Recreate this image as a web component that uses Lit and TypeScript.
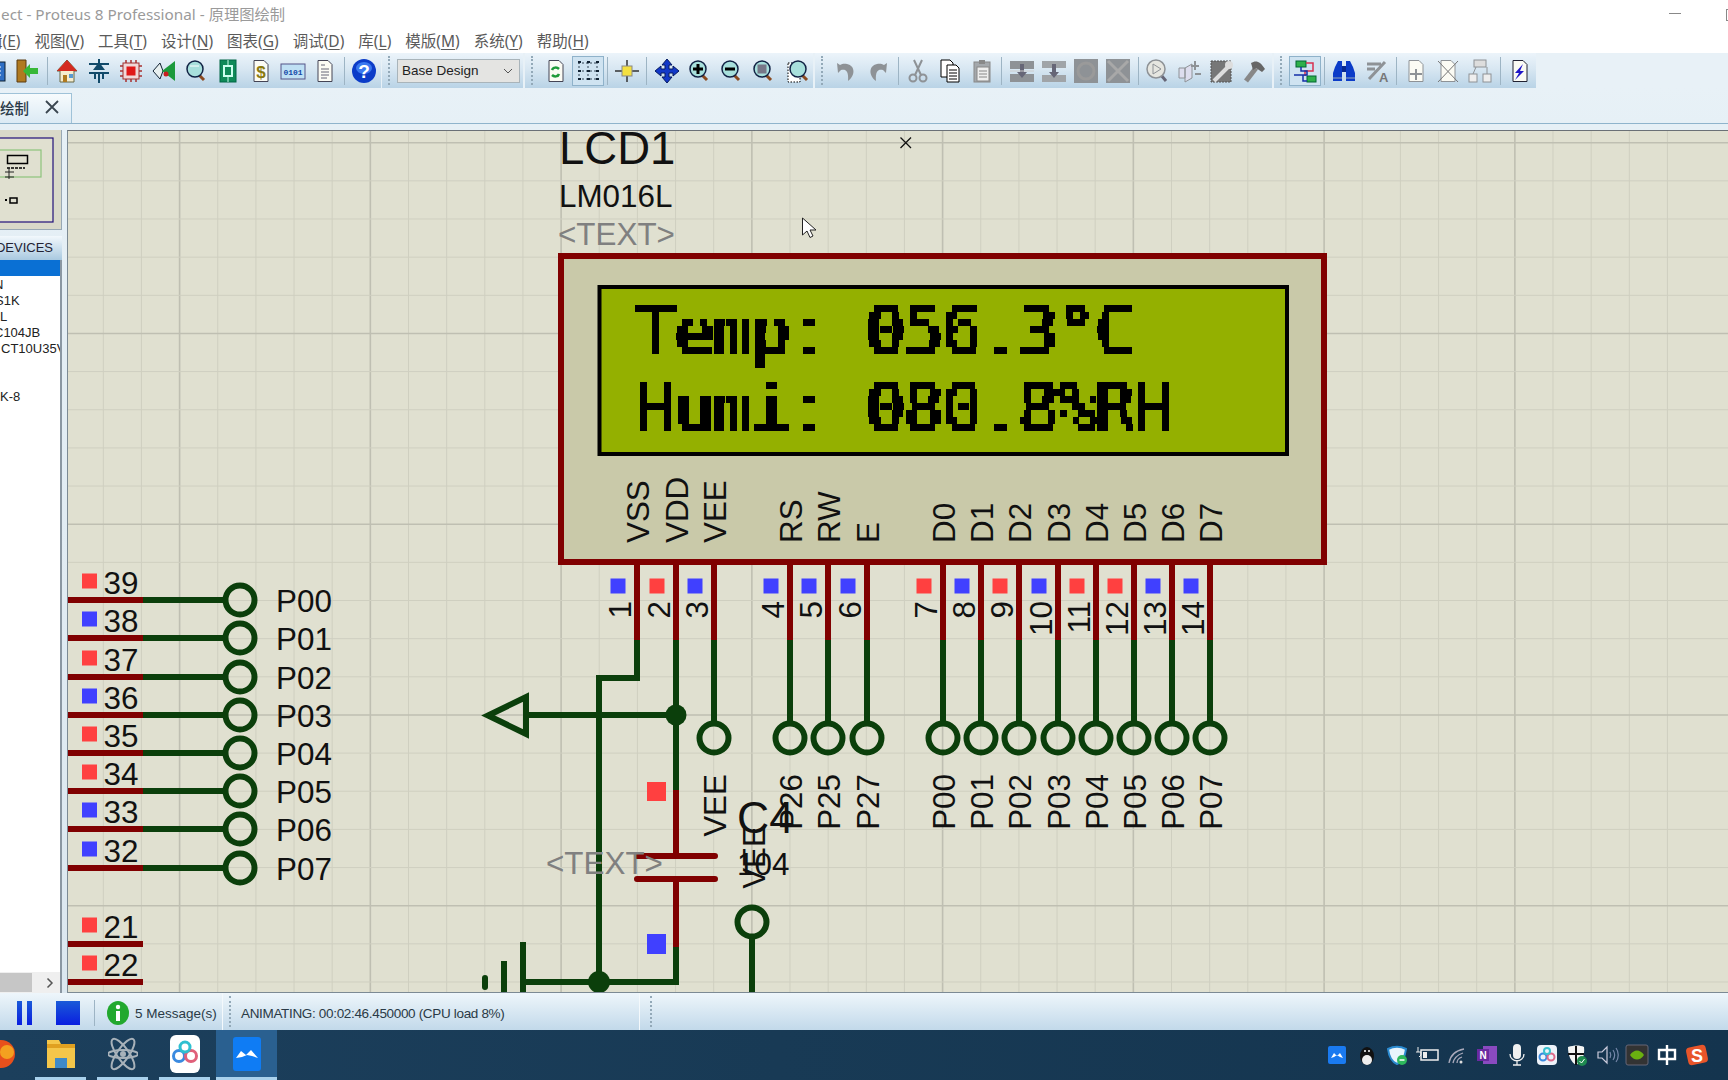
import { LitElement, html, css, svg } from "lit";
import { customElement } from "lit/decorators.js";

const RED = "#800000";
const GREEN = "#0b3f0b";
const BOX_RED = "#ff4040";
const BOX_BLUE = "#4040ff";

// --- toolbar icons, all on a 24x24 box ---
const mag = (inner: unknown, fill = "#a8e0dc") => svg`
  <path d="M15 16l5 5" stroke="#8a4a20" stroke-width="3" />
  <circle cx="11" cy="10" r="8" fill=${fill} stroke="#124" stroke-width="1.5" />${inner}`;
const page = (inner: unknown, stroke = "#445") => svg`
  <path d="M5 1.5h10l4 4v17H5z" fill="#fbfbf4" stroke=${stroke} />${inner}`;
const grey = "#8e9296";

const ICONS: Record<string, unknown> = {
  book: svg`<rect x="2" y="3" width="20" height="19" fill="#2f6fc4" stroke="#123" /><path d="M6 8h12M6 12h12M6 16h12" stroke="#fff" />`,
  door: svg`<path d="M2 1h9v22H2z" fill="#b07a20" stroke="#5a3a10" /><path d="M8 12l7-7v4h8v6h-8v4z" fill="#38b838" />`,
  house: svg`<path d="M12 1L2 12h3v11h14V12h3z" fill="#f6edd0" stroke="#664" /><path d="M12 1L2 12h20z" fill="#d42a20" /><rect x="8" y="16" width="4" height="7" fill="#b07a20" /><rect x="14" y="15" width="4" height="4" fill="#5a9ad0" />`,
  diode: svg`<path d="M12 0v9M2 5h20M2 14h20M12 14v10M8 14v6M16 14v6" stroke="#124a6a" stroke-width="2" fill="none" /><path d="M6 11L12 3l6 8z" fill="#124a6a" />`,
  chip: svg`<path d="M1 7h22M1 12h22M1 17h22M7 1v22M12 1v22M17 1v22" stroke="#a83030" stroke-width="1.5" /><rect x="4" y="4" width="16" height="16" fill="#f0d8d8" stroke="#a03030" /><rect x="7.5" y="7.5" width="9" height="9" fill="#e01818" />`,
  led: svg`<path d="M1 12L8 4l3 8-3 8z" fill="#e8f0f0" stroke="#123" /><path d="M23 2v20L10 12z" fill="#1c9a3c" /><circle cx="14" cy="15" r="2.5" fill="#c82020" />`,
  glass: mag(svg`<path d="M6 7h9" stroke="#fff" />`),
  pcb: svg`<rect x="4" y="1" width="16" height="22" fill="#0f8a58" stroke="#064" /><rect x="8" y="7" width="8" height="10" fill="none" stroke="#cfe" stroke-width="2" /><path d="M12 1v6M12 17v6" stroke="#cfe" />`,
  dollar: page(svg`<text x="12" y="19" font-size="17" font-weight="700" text-anchor="middle" fill="#8a7a10" font-family="Liberation Sans">$</text>`),
  binary: svg`<rect x="0" y="5" width="24" height="15" fill="#bfe0f4" stroke="#558" /><text x="12" y="15.5" font-size="8" font-weight="700" text-anchor="middle" fill="#1448a8" font-family="Liberation Mono">0101</text>`,
  report: page(svg`<path d="M8 6h4M8 10h8M8 13h8M8 16h8M8 19h6" stroke="#667" />`),
  help: svg`<circle cx="12" cy="12" r="12" fill="#0c3cc8" /><ellipse cx="12" cy="9" rx="8" ry="6" fill="#3a78f0" /><text x="12" y="19" font-size="19" font-weight="700" text-anchor="middle" fill="#fff" font-family="Liberation Sans">?</text>`,
  refresh: page(svg`<path d="M8 11c1-3 5-3 7-1M15 15c-1 3-5 3-7 1" stroke="#1f9a3a" stroke-width="2.5" fill="none" />`),
  grid: svg`<path d="M3 3v18M12 3v18M21 3v18M2 4h20M2 12h20M2 20h20" stroke="#345" stroke-dasharray="2 2" /><path d="M2 3h3M11 3h3M20 3h3M2 12h3M11 12h3M20 12h3M2 20h3M11 20h3M20 20h3" stroke="#123" stroke-width="2" />`,
  origin: svg`<path d="M12 1v22M0 12h24" stroke="#333" stroke-width="1.5" /><rect x="7" y="7" width="10" height="10" fill="#f4e040" stroke="#888" />`,
  move: svg`<path d="M12 0l5 6h-3v4h4V7l6 5-6 5v-3h-4v4h3l-5 6-5-6h3v-4H6v3l-6-5 6-5v3h4V6H7z" fill="#1238c8" stroke="#061a60" />`,
  zoomIn: mag(svg`<path d="M6 10h10M11 5v10" stroke="#000" stroke-width="3" />`),
  zoomOut: mag(svg`<path d="M6 10h10" stroke="#000" stroke-width="3" />`),
  zoomAll: mag(svg`<rect x="6.5" y="5.5" width="9" height="9" fill="#778" />`),
  zoomArea: svg`<g transform="translate(3 0)"><rect x="1" y="4" width="12" height="19" fill="#fff" stroke="#000" stroke-dasharray="1.5 1.5" />${mag(svg``)}</g>`,
  undo: svg`<path d="M3 4l1 10 3-3c4-1 8 0 7 11 7-5 8-15-1-17-3-.5-5 0-7 1z" fill=${grey} />`,
  redo: svg`<path d="M21 4l-1 10-3-3c-4-1-8 0-7 11-7-5-8-15 1-17 3-.5 5 0 7 1z" fill=${grey} />`,
  cut: svg`<path d="M8 1l7 15M16 1L9 16" stroke=${grey} stroke-width="2" /><circle cx="7" cy="19" r="3.5" fill="none" stroke=${grey} stroke-width="2" /><circle cx="17" cy="19" r="3.5" fill="none" stroke=${grey} stroke-width="2" />`,
  copy: svg`<path d="M3 1h9l3 3v14H3z" fill="#fff" stroke="#000" /><path d="M9 6h9l3 3v14H9z" fill="#fff" stroke="#000" /><path d="M11 11h8M11 14h8M11 17h8M11 20h8" stroke="#000" />`,
  paste: svg`<rect x="4" y="3" width="16" height="20" fill="#a4a8ac" stroke="#888" /><rect x="9" y="1" width="6" height="4" fill="#888" /><rect x="7" y="8" width="12" height="14" fill="#eee" stroke="#888" /><path d="M9 12h8M9 15h8M9 18h8" stroke="#888" />`,
  blockCopy: svg`<rect x="0" y="2" width="24" height="8" fill=${grey} /><rect x="0" y="15" width="24" height="8" fill=${grey} /><path d="M10 5h4v8h3l-5 6-5-6h3z" fill="#667" /><path d="M0 12h24" stroke="#ccc" />`,
  blockMove: svg`<rect x="0" y="2" width="24" height="7" fill="#a0a4a8" /><rect x="0" y="16" width="24" height="7" fill="#a0a4a8" /><path d="M10 5h4v8h3l-5 6-5-6h3z" fill="#667" />`,
  blockRot: svg`<rect x="0" y="0" width="24" height="24" fill=${grey} /><circle cx="12" cy="12" r="8" fill="none" stroke="#9a9a9a" stroke-width="3" />`,
  blockDel: svg`<rect x="0" y="0" width="24" height="24" fill=${grey} /><path d="M2 2l20 20M22 2L2 22" stroke="#a8a8a8" stroke-width="3" />`,
  pick: svg`<path d="M15 16l5 6" stroke="#667" stroke-width="3" /><circle cx="10" cy="10" r="9" fill="#e6e6e0" stroke=${grey} stroke-width="1.5" /><path d="M7 5v10l8-5z" fill="none" stroke=${grey} />`,
  plug: svg`<path d="M1 9h6v10H1zM7 9l7-4v14l-7 4z" fill="#dde" stroke=${grey} /><path d="M17 2v9M13 7h8M17 15h6" stroke=${grey} stroke-width="2" />`,
  tools: svg`<rect x="1" y="2" width="20" height="21" fill="#777" stroke-dasharray="2 1" stroke="#555" /><path d="M4 22L18 8" stroke="#ddd" stroke-width="4" /><circle cx="19" cy="6" r="4" fill="#ddd" />`,
  hammer: svg`<path d="M3 22L13 9" stroke="#888" stroke-width="5" /><path d="M8 4c5-3 9-2 14 6l-3 3-6-4-3 2z" fill="#666" />`,
  nets: svg`<rect x="3" y="2" width="10" height="6" fill="#2eb04a" stroke="#063" /><rect x="14" y="17" width="9" height="6" fill="#2eb04a" stroke="#063" /><path d="M13 4h7v8h-8v5" fill="none" stroke="#d83050" stroke-width="1.5" /><path d="M8 8v4h6v4h-4v6h4M1 16h9" fill="none" stroke="#1430a8" stroke-width="1.5" />`,
  binoc: svg`<path d="M3 8l3-6h4v20H1V14zM21 8l-3-6h-4v20h9V14z" fill="#0c3cc8" /><path d="M1 19h9M14 19h9" stroke="#9ab" /><rect x="10" y="7" width="4" height="6" fill="#0a2a90" />`,
  textA: svg`<path d="M2 5h14M2 10h8M4 20L20 3" stroke=${grey} stroke-width="3" /><text x="14" y="23" font-size="13" font-weight="700" fill="#777" font-family="Liberation Sans">A</text>`,
  docAdd: page(svg`<path d="M12 10v11M6 15h12" stroke=${grey} stroke-width="2" />`, grey),
  docDel: page(svg`<path d="M2 2l20 21M22 2L2 23" stroke="#777" />`, grey),
  tree: svg`<rect x="6" y="1" width="12" height="7" fill="#ddd" stroke=${grey} /><rect x="1" y="15" width="8" height="8" fill="#eee" stroke=${grey} /><rect x="15" y="15" width="8" height="8" fill="#eee" stroke=${grey} /><path d="M5 15l3-7M19 15V8" stroke=${grey} />`,
  bolt: page(svg`<path d="M15 5l-8 9h4l-4 7 9-9h-4z" fill="#2016c8" />`, "#223"),
};

type Tool = { icon?: string; sep?: boolean; on?: boolean };
const t = (icon: string, on = false): Tool => ({ icon, on });
const SEP: Tool = { sep: true };

// --- schematic data ---
const LCD_PINS = [
  { n: 1, x: 637, name: "VSS", box: BOX_BLUE },
  { n: 2, x: 676, name: "VDD", box: BOX_RED },
  { n: 3, x: 714, name: "VEE", box: BOX_BLUE, net: "VEE" },
  { n: 4, x: 790, name: "RS", box: BOX_BLUE, net: "P26" },
  { n: 5, x: 828, name: "RW", box: BOX_BLUE, net: "P25" },
  { n: 6, x: 867, name: "E", box: BOX_BLUE, net: "P27" },
  { n: 7, x: 943, name: "D0", box: BOX_RED, net: "P00" },
  { n: 8, x: 981, name: "D1", box: BOX_BLUE, net: "P01" },
  { n: 9, x: 1019, name: "D2", box: BOX_RED, net: "P02" },
  { n: 10, x: 1058, name: "D3", box: BOX_BLUE, net: "P03" },
  { n: 11, x: 1096, name: "D4", box: BOX_RED, net: "P04" },
  { n: 12, x: 1134, name: "D5", box: BOX_RED, net: "P05" },
  { n: 13, x: 1172, name: "D6", box: BOX_BLUE, net: "P06" },
  { n: 14, x: 1210, name: "D7", box: BOX_BLUE, net: "P07" },
];

const MCU_PINS = [
  { n: 39, y: 600, box: BOX_RED, net: "P00" },
  { n: 38, y: 638, box: BOX_BLUE, net: "P01" },
  { n: 37, y: 677, box: BOX_RED, net: "P02" },
  { n: 36, y: 715, box: BOX_BLUE, net: "P03" },
  { n: 35, y: 753, box: BOX_RED, net: "P04" },
  { n: 34, y: 791, box: BOX_RED, net: "P05" },
  { n: 33, y: 829, box: BOX_BLUE, net: "P06" },
  { n: 32, y: 868, box: BOX_BLUE, net: "P07" },
  { n: 21, y: 944, box: BOX_RED },
  { n: 22, y: 982, box: BOX_RED },
  { n: 23, y: 1020, box: BOX_RED },
];

const range = (n: number) => Array.from({ length: n }, (_, i) => i);

@customElement("schem-canvas")
class SchemCanvas extends LitElement {
  static styles = css`
    :host {
      display: block;
      width: 1661px;
      height: 863px;
      background: #e0e0d0;
      overflow: hidden;
    }
    svg {
      display: block;
      width: 1661px;
      height: 863px;
      font-family: "Liberation Sans", Arial, sans-serif;
    }
    .lcd-text {
      font-family: "DejaVu Sans Mono", monospace;
      font-size: 67px;
      letter-spacing: -2.1px;
      fill: #000;
      stroke: #000;
      stroke-width: 0.4px;
    }
    .label {
      font-size: 31.4px;
      fill: #111;
    }
    .ghost {
      font-size: 31.4px;
      fill: #808080;
    }
    .wire {
      fill: none;
      stroke: #0b3f0b;
      stroke-width: 6;
    }
    .pin {
      fill: none;
      stroke: #800000;
      stroke-width: 6;
    }
  `;

  grid() {
    return svg`
      ${range(43).map((k) => {
        const x = 65.15 + 38.15 * k;
        const major = (k + 4) % 5 === 2;
        return svg`<line x1=${x} x2=${x} y1="130" y2="993" stroke=${major ? "#bfbfb2" : "#cfcfc0"} stroke-width=${major ? 1.6 : 1} />`;
      })}
      ${range(23).map((k) => {
        const y = 142.7 + 38.15 * k;
        return svg`<line x1="67" x2="1728" y1=${y} y2=${y} stroke=${k % 5 === 0 ? "#bfbfb2" : "#cfcfc0"} stroke-width=${k % 5 === 0 ? 1.6 : 1} />`;
      })}
    `;
  }

  lcd() {
    return svg`
      <text x="559" y="164" font-size="45.5" fill="#111">LCD1</text>
      <text x="559" y="207" class="label">LM016L</text>
      <text x="558" y="245" class="ghost">&lt;TEXT&gt;</text>
      <rect x="561" y="256" width="763" height="306" fill="#c9c9a9" stroke=${RED} stroke-width="6" />
      <rect x="599.5" y="287" width="687.5" height="167" fill="#94b000" stroke="#000" stroke-width="4" />
      <defs>
        <filter id="dots" filterUnits="userSpaceOnUse" x="600" y="290" width="686" height="162" color-interpolation-filters="sRGB">
          <feFlood x="600.8" y="294" width="2" height="1" flood-color="#000" />
          <feComposite x="600" y="294" width="6.37" height="7" />
          <feTile result="grid" />
          <feComposite in="SourceGraphic" in2="grid" operator="in" />
          <feComponentTransfer><feFuncA type="discrete" tableValues="0 0 1 1" /></feComponentTransfer>
          <feMorphology operator="dilate" radius="2 3" />
        </filter>
      </defs>
      <g filter="url(#dots)">
        <text x="636" y="354" class="lcd-text">Temp: 056.3°C</text>
        <text x="636" y="431" class="lcd-text">Humi: 080.8%RH</text>
      </g>
      ${LCD_PINS.map(
        (p) => svg`
          <text class="label" transform="translate(${p.x + 12} 543) rotate(-90)">${p.name}</text>
          <path class="pin" d="M${p.x} 562V640" />
          <rect x=${p.x - 26.5} y="578.5" width="15" height="15" fill=${p.box} />
          <text class="label" text-anchor="end" transform="translate(${p.x - 6} 601) rotate(-90)">${p.n}</text>
        `,
      )}
      ${LCD_PINS.filter((p) => p.net).map(
        (p) => svg`
          <path class="wire" d="M${p.x} 640V724" />
          <circle class="wire" cx=${p.x} cy="738" r="14.5" />
          <text class="label" text-anchor="end" transform="translate(${p.x + 11.5} 774) rotate(-90)">${p.net}</text>
        `,
      )}
    `;
  }

  power() {
    return svg`
      <path class="wire" d="M637 640V678H599V982" />
      <path class="wire" d="M676 640V790" />
      <path class="wire" d="M676 947V982H523" />
      <path class="wire" d="M676 715H525" />
      <path class="wire" d="M526 697V734L488 715.5Z" />
      <circle cx="676" cy="715" r="10.5" fill=${GREEN} />
      <circle cx="599" cy="982" r="11" fill=${GREEN} />
      <path class="wire" d="M523 942V993M504 961V993" />
      <path d="M485 978V987" stroke=${GREEN} stroke-width="6" stroke-linecap="round" />

      <path class="pin" d="M676 790V855M676 879V947" />
      <path class="pin" stroke-linecap="round" d="M637 856H715M637 879H715" />
      <rect x="647" y="782" width="19" height="19" fill=${BOX_RED} />
      <rect x="647" y="934" width="19" height="20" fill=${BOX_BLUE} />

      <text x="546" y="874" class="ghost">&lt;TEXT&gt;</text>
      <text x="737" y="833" font-size="44.5" fill="#111">C4</text>
      <text x="737" y="875" class="label">104</text>
      <text class="label" text-anchor="end" transform="translate(765 826) rotate(-90)">VEE</text>
      <circle class="wire" cx="752" cy="922" r="14.5" />
      <path class="wire" d="M752 936V993" />
    `;
  }

  mcu() {
    return MCU_PINS.map(
      (p) => svg`
        <path class="pin" d="M67 ${p.y}H143" />
        <rect x="82" y=${p.y - 26.5} width="15" height="15" fill=${p.box} />
        <text x="103.5" y=${p.y - 6.5} class="label">${p.n}</text>
        ${p.net
          ? svg`
            <path class="wire" d="M143 ${p.y}H226" />
            <circle class="wire" cx="240" cy=${p.y} r="14.5" />
            <text x="276" y=${p.y + 12} class="label">${p.net}</text>`
          : null}
      `,
    );
  }

  render() {
    return html`<svg viewBox="67 130 1661 863">
      ${this.grid()} ${this.mcu()} ${this.lcd()} ${this.power()}
      <path d="M900.5 137.5l10.5 10.5M911 137.5l-10.5 10.5" stroke="#111" stroke-width="1.3" />
      <path d="M802.5 218v17l4.5-4 3 6.5 3-1.5-3-6h6z" fill="#fff" stroke="#222" stroke-width="1" />
    </svg>`;
  }
}

const DEVICES = [
  { name: "", on: true, x: 0 },
  { name: "N", x: -6 },
  { name: "S1K", x: -5 },
  { name: "L", x: 0 },
  { name: "C104JB", x: -6 },
  { name: "CT10U35V", x: 1 },
  { name: "", x: 0 },
  { name: "", x: 0 },
  { name: "K-8", x: 0 },
];

@customElement("side-panel")
class SidePanel extends LitElement {
  static styles = css`
    :host {
      display: flex;
      flex-direction: column;
      width: 62px;
      height: 863px;
      font-family: "Liberation Sans", Arial, sans-serif;
      overflow: hidden;
    }
    .overview {
      height: 100px;
      flex: none;
      background: #d9d9c9;
      border-right: 1px solid #98a8b4;
      border-bottom: 1px solid #98a8b4;
      box-sizing: border-box;
    }
    .overview svg {
      display: block;
    }
    .gap {
      height: 6px;
      flex: none;
    }
    .head {
      height: 24px;
      flex: none;
      box-sizing: border-box;
      padding: 0 9px 2px 0;
      display: flex;
      align-items: center;
      justify-content: flex-end;
      font-size: 13px;
      color: #223;
      white-space: nowrap;
      background: linear-gradient(#f2f8fc, #a9c9e0);
    }
    .list {
      flex: 1;
      background: #fff;
      border-right: 2px solid #8a97a2;
      overflow: hidden;
    }
    .row {
      height: 16px;
      line-height: 18px;
      font-size: 13px;
      color: #222;
      white-space: nowrap;
    }
    .row.on {
      background: #0a70d4;
    }
    .row span {
      display: inline-block;
    }
    .scroll {
      height: 21px;
      flex: none;
      display: flex;
      align-items: center;
      justify-content: space-between;
      background: #efefef;
      border-right: 2px solid #8a97a2;
    }
    .thumb {
      width: 32px;
      height: 19px;
      background: #c6c6c6;
    }
    .scroll svg {
      margin-right: 6px;
    }
  `;

  render() {
    return html`
      <div class="overview">
        <svg width="62" height="100" viewBox="0 130 62 100">
          <rect x="-10" y="138" width="63" height="84" fill="#e0e0d0" stroke="#20107a" stroke-width="1.2" />
          <rect x="-10" y="150" width="51" height="27" fill="none" stroke="#8cc47c" stroke-width="1.2" />
          <rect x="7.5" y="155.5" width="20" height="8" fill="none" stroke="#000" stroke-width="1.5" />
          <path d="M7 168h18" stroke="#000" stroke-width="1.5" stroke-dasharray="3 1" />
          <path d="M9 168v11M5 172h9M5 177h9" stroke="#222" />
          <path d="M5 200h2" stroke="#000" stroke-width="2" />
          <rect x="10" y="198" width="7" height="5" fill="none" stroke="#000" stroke-width="1.5" />
        </svg>
      </div>
      <div class="gap"></div>
      <div class="head">DEVICES</div>
      <div class="list">
        ${DEVICES.map(
          (d) => html`<div class="row ${d.on ? "on" : ""}"><span style="margin-left:${d.x}px">${d.name}</span></div>`,
        )}
      </div>
      <div class="scroll">
        <div class="thumb"></div>
        <svg width="8" height="12" viewBox="0 0 8 12"><path d="M1.5 1.5L6 6l-4.5 4.5" fill="none" stroke="#555" stroke-width="1.5" /></svg>
      </div>
    `;
  }
}

const MENUS = [
  ["编辑(", "E", ")"],
  ["视图(", "V", ")"],
  ["工具(", "T", ")"],
  ["设计(", "N", ")"],
  ["图表(", "G", ")"],
  ["调试(", "D", ")"],
  ["库(", "L", ")"],
  ["模版(", "M", ")"],
  ["系统(", "Y", ")"],
  ["帮助(", "H", ")"],
];

const TRAY: unknown[] = [
  svg`<rect x="3" y="3" width="18" height="18" rx="2" fill="#1a7af0" /><path d="M6 15l3-5 3 3 3-3 3 5-3-1-3-2-3 2z" fill="#fff" />`,
  svg`<ellipse cx="12" cy="13" rx="7" ry="9" fill="#111" /><ellipse cx="12" cy="17" rx="5" ry="5" fill="#eee" /><circle cx="10" cy="8" r="1" fill="#fff" /><circle cx="14" cy="8" r="1" fill="#fff" />`,
  svg`<path d="M3 6c6-3 12-3 18 0-1 8-4 13-9 15C7 19 4 14 3 6z" fill="#e8f4fc" stroke="#2a8ad0" stroke-width="2" /><circle cx="17" cy="17" r="5" fill="#2eb85c" /><path d="M14.5 17h5" stroke="#fff" stroke-width="1.5" />`,
  svg`<rect x="6" y="7" width="17" height="10" fill="none" stroke="#eee" stroke-width="1.5" /><rect x="8" y="9" width="4" height="6" fill="#eee" /><path d="M3 4v5M1 9h5v3l-2 2" stroke="#eee" fill="none" />`,
  svg`<path d="M4 20c1-7 5-12 15-14M8 20c1-5 4-8 10-10M12 20c0-3 2-5 5-6" fill="none" stroke="#aab" stroke-width="1.3" /><circle cx="16" cy="19" r="1.5" fill="#ddd" />`,
  svg`<rect x="8" y="3" width="14" height="18" fill="#8a4ac0" /><rect x="2" y="6" width="12" height="12" fill="#6a2aa0" /><text x="8" y="16" font-size="10" font-weight="700" fill="#fff" text-anchor="middle" font-family="Liberation Sans">N</text>`,
  svg`<rect x="8" y="1" width="8" height="15" rx="4" fill="#f0f0f0" /><path d="M5 11c0 9 14 9 14 0M12 18v4M8 22h8" fill="none" stroke="#eee" stroke-width="1.3" />`,
  svg`<rect x="2" y="2" width="20" height="20" rx="4" fill="#eef3fa" /><circle cx="8" cy="14" r="3.5" fill="none" stroke="#3a8ae0" stroke-width="2" /><circle cx="16" cy="14" r="3.5" fill="none" stroke="#e06a8a" stroke-width="2" /><circle cx="12" cy="8" r="3" fill="none" stroke="#3ac0d0" stroke-width="2" />`,
  svg`<path d="M3 4c6-2 12-2 16 0 1 9-2 15-8 18C6 19 3 13 3 4z" fill="#f4f4f4" /><path d="M11 3v19M3 11h16" stroke="#111" stroke-width="2" /><circle cx="17" cy="18" r="5" fill="#1f8a50" /><path d="M14.5 18l2 2 3-4" stroke="#fff" fill="none" />`,
  svg`<path d="M3 9h4l5-5v16l-5-5H3z" fill="none" stroke="#ccd" stroke-width="1.2" /><path d="M15 9c1 2 1 4 0 6M18 7c2 3 2 7 0 10M21 5c3 4 3 10 0 14" fill="none" stroke="#78a" stroke-width="1.2" />`,
  svg`<rect x="1" y="2" width="22" height="20" rx="2" fill="#333" stroke="#667" /><path d="M5 12c4-6 10-6 14 0-4 6-10 6-14 0z" fill="#6ab010" />`,
  svg`<path d="M4 7h16v9H4zM12 2v20" fill="none" stroke="#fff" stroke-width="2.4" />`,
  svg`<rect x="2" y="3" width="20" height="18" rx="4" fill="#e8552a" transform="rotate(-12 12 12)" /><text x="12" y="19" font-size="18" font-weight="700" text-anchor="middle" fill="#fff" font-family="Liberation Sans">S</text>`,
];

@customElement("app-root")
export class AppRoot extends LitElement {
  static styles = css`
    :host {
      display: flex;
      flex-direction: column;
      width: 1728px;
      height: 1080px;
      overflow: hidden;
      background: #e8f1f7;
      font-family: "Noto Sans", "Noto Sans CJK SC", sans-serif;
    }
    .title {
      height: 30px;
      line-height: 29px;
      flex: none;
      box-sizing: border-box;
      padding-left: 1px;
      background: #fff;
      color: #9a9a9a;
      font-size: 15.3px;
      white-space: nowrap;
      position: relative;
    }
    .win-min {
      position: absolute;
      left: 1669px;
      top: 13px;
      width: 12px;
      height: 1px;
      background: #888;
    }
    .win-max {
      position: absolute;
      left: 1726px;
      top: 9px;
      width: 10px;
      height: 10px;
      border: 1px solid #888;
    }
    .menu {
      height: 23px;
      flex: none;
      box-sizing: border-box;
      padding-bottom: 2px;
      display: flex;
      gap: 14px;
      align-items: center;
      margin-left: -28.5px;
      background: #fff;
      color: #5a5a5a;
      font-size: 15.5px;
      white-space: nowrap;
    }
    .menu u {
      text-underline-offset: 2px;
    }
    .toolbars {
      height: 35px;
      flex: none;
      display: flex;
      align-items: stretch;
      margin-left: -21px;
    }
    .seg {
      display: flex;
      align-items: center;
      background: linear-gradient(#ecf4fa, #d8e7f2 45%, #b9d3e6);
      margin-right: 1.5px;
    }
    .grip {
      width: 15px;
      height: 100%;
      flex: none;
      position: relative;
    }
    .grip::before {
      content: "";
      position: absolute;
      left: 6px;
      top: 3px;
      bottom: 3px;
      border-left: 2px dotted #93a9b8;
    }
    .tb {
      width: 32.3px;
      height: 30px;
      flex: none;
      box-sizing: border-box;
      display: flex;
      align-items: center;
      justify-content: center;
    }
    .tb.on {
      background: #cfe3f1;
      border: 1px solid #8fb2ca;
    }
    .tb svg {
      width: 24px;
      height: 24px;
      display: block;
      overflow: visible;
    }
    .sep {
      width: 1px;
      height: 28px;
      margin: 0 3px;
      flex: none;
      background: #9db4c4;
    }
    .combo {
      width: 123px;
      height: 24px;
      box-sizing: border-box;
      margin-right: 3px;
      border: 1px solid #a9b4ba;
      background: #e4e4e2;
      display: flex;
      align-items: center;
      justify-content: space-between;
      padding: 0 6px 0 4px;
      font: 13.5px "Liberation Sans", Arial, sans-serif;
      color: #222;
    }
    .pad-end {
      width: 1.5px;
      flex: none;
    }
    .tabs {
      height: 36px;
      flex: none;
      box-sizing: border-box;
      padding-top: 5px;
      border-bottom: 1px solid #8fb4cc;
      background: linear-gradient(#e8f1f7, #e6f0f6);
    }
    .tab {
      width: 72px;
      height: 30px;
      box-sizing: border-box;
      padding-bottom: 3px;
      display: flex;
      align-items: center;
      gap: 16px;
      background: linear-gradient(#f7fbfd, #dbeaf4);
      border: 1px solid #9fc2d8;
      border-left: none;
      border-bottom: none;
      font-size: 14.5px;
      font-weight: 500;
      color: #2b3a48;
    }
    .tab svg {
      display: block;
    }
    .main {
      flex: none;
      height: 869px;
      box-sizing: border-box;
      padding-top: 6px;
      display: flex;
      gap: 5px;
      background: linear-gradient(#e6f0f6, #dbe7ef);
    }
    .canvas-wrap {
      position: relative;
    }
    .canvas-wrap::after {
      content: "";
      position: absolute;
      inset: 0;
      border-left: 1.5px solid #7c8a94;
      border-top: 1.5px solid #6a7076;
      border-bottom: 1px solid #7c8a94;
      pointer-events: none;
    }
    .status {
      height: 37px;
      flex: none;
      display: flex;
      align-items: stretch;
      background: linear-gradient(#eef6fb, #c2d9ea);
      font: 13.5px "Liberation Sans", Arial, sans-serif;
      color: #2a3a46;
    }
    .st-group {
      display: flex;
      align-items: center;
      width: 223px;
      box-sizing: border-box;
      padding: 3px 0 0 16px;
      border-right: 1px solid #f4f9fc;
      flex: none;
    }
    .st-group svg {
      flex: none;
    }
    .st-group .sep {
      margin: 0 12px 0 14px;
      height: 26px;
    }
    .stop {
      margin-left: 23px;
    }
    .st-msg {
      margin-left: 6px;
      white-space: nowrap;
    }
    .st-text {
      width: 402px;
      flex: none;
      box-sizing: border-box;
      padding: 3px 0 0 3px;
      margin-right: 4px;
      display: flex;
      align-items: center;
      white-space: nowrap;
      letter-spacing: -0.33px;
      border-right: 1px solid #f4f9fc;
    }
    .taskbar {
      flex: 1;
      display: flex;
      justify-content: space-between;
      background: linear-gradient(90deg, #1c3f5c, #183a55 45%, #14344e);
    }
    .apps {
      display: flex;
      margin-left: -27px;
    }
    .app {
      width: 51px;
      margin-right: 11px;
      display: flex;
      align-items: center;
      justify-content: center;
      border-bottom: 3px solid #a9d1ec;
      box-sizing: border-box;
    }
    .app.plain {
      border-bottom-color: transparent;
    }
    .app.active {
      width: 61px;
      margin-left: -5px;
      background: #2a6090;
    }
    .tray {
      display: flex;
      align-items: center;
      gap: 6px;
      padding-right: 19px;
    }
    .tray svg {
      display: block;
      width: 24px;
      height: 24px;
    }
  `;

  tools(list: Tool[]) {
    return list.map((it) =>
      it.sep
        ? html`<div class="sep"></div>`
        : html`<div class="tb ${it.on ? "on" : ""}"><svg viewBox="0 0 24 24">${ICONS[it.icon!]}</svg></div>`,
    );
  }

  render() {
    return html`
      <div class="title">
        ect - Proteus 8 Professional - 原理图绘制
        <div class="win-min"></div>
        <div class="win-max"></div>
      </div>
      <div class="menu">
        ${MENUS.map((m) => html`<span>${m[0]}<u>${m[1]}</u>${m[2]}</span>`)}
      </div>
      <div class="toolbars">
        <div class="seg">
          ${this.tools([
            t("book"), t("door"), SEP, t("house"), t("diode"), t("chip"), t("led"), t("glass"),
            t("pcb"), t("dollar"), t("binary"), t("report"), SEP, t("help"),
          ])}
        </div>
        <div class="seg">
          <div class="grip"></div>
          <div class="combo">
            Base Design
            <svg width="10" height="6" viewBox="0 0 10 6"><path d="M1 1l4 4 4-4" fill="none" stroke="#555" /></svg>
          </div>
        </div>
        <div class="seg">
          <div class="grip"></div>
          ${this.tools([
            t("refresh"), t("grid", true), SEP, t("origin"), SEP, t("move"), t("zoomIn"), t("zoomOut"),
            t("zoomAll"), t("zoomArea"),
          ])}
          <div class="pad-end"></div>
        </div>
        <div class="seg">
          <div class="grip"></div>
          ${this.tools([
            t("undo"), t("redo"), SEP, t("cut"), t("copy"), t("paste"), SEP, t("blockCopy"), t("blockMove"),
            t("blockRot"), t("blockDel"), SEP, t("pick"), t("plug"), t("tools"), t("hammer"),
          ])}
          <div class="pad-end"></div>
        </div>
        <div class="seg">
          <div class="grip"></div>
          ${this.tools([
            t("nets", true), SEP, t("binoc"), t("textA"), SEP, t("docAdd"), t("docDel"), t("tree"), SEP, t("bolt"),
          ])}
        </div>
      </div>
      <div class="tabs">
        <div class="tab">
          绘制
          <svg width="14" height="14" viewBox="0 0 14 14"><path d="M1 1l12 12M13 1L1 13" stroke="#3a4650" stroke-width="1.8" /></svg>
        </div>
      </div>
      <div class="main">
        <side-panel></side-panel>
        <div class="canvas-wrap"><schem-canvas></schem-canvas></div>
      </div>
      <div class="status">
        <div class="st-group">
          <svg width="17" height="24" viewBox="0 0 17 24"><defs><linearGradient id="b" x1="0" y1="0" x2="0" y2="1"><stop offset="0" stop-color="#1a5ad8" /><stop offset="1" stop-color="#0a1ee0" /></linearGradient></defs><rect x="1" width="5" height="24" fill="url(#b)" /><rect x="11" width="5" height="24" fill="url(#b)" /></svg>
          <svg class="stop" width="24" height="24" viewBox="0 0 24 24"><rect width="24" height="24" fill="url(#b)" /></svg>
          <div class="sep"></div>
          <svg width="22" height="24" viewBox="0 0 22 24"><ellipse cx="11" cy="12" rx="11" ry="12" fill="#22a82e" /><circle cx="11" cy="6" r="2.2" fill="#fff" /><rect x="9" y="10" width="4" height="10" fill="#fff" /></svg>
          <span class="st-msg">5 Message(s)</span>
        </div>
        <div class="grip"></div>
        <div class="st-text">ANIMATING: 00:02:46.450000 (CPU load 8%)</div>
        <div class="grip"></div>
      </div>
      <div class="taskbar">
        <div class="apps">
          <div class="app plain">
            <svg width="32" height="34" viewBox="0 0 32 34"><circle cx="18" cy="17" r="14" fill="#e8501c" /><circle cx="24" cy="15" r="7" fill="#f4a020" /></svg>
          </div>
          <div class="app">
            <svg width="30" height="32" viewBox="0 0 30 32"><path d="M1 2h12l2 4h14v24H1z" fill="#f4c64a" /><path d="M1 6h28v4H1z" fill="#e0a020" /><path d="M9 20h12v10H9z" fill="#3f8ac8" /></svg>
          </div>
          <div class="app">
            <svg width="30" height="36" viewBox="0 0 30 36"><g fill="none" stroke="#a8b2ba" stroke-width="2"><ellipse cx="15" cy="18" rx="6" ry="18" transform="rotate(35 15 18)" /><ellipse cx="15" cy="18" rx="6" ry="18" transform="rotate(-35 15 18)" /><ellipse cx="15" cy="18" rx="15" ry="4" /></g><circle cx="15" cy="18" r="3" fill="#a8b2ba" /></svg>
          </div>
          <div class="app">
            <svg width="30" height="38" viewBox="0 0 30 38"><rect width="30" height="38" rx="6" fill="#fff" /><circle cx="9" cy="21" r="5.5" fill="none" stroke="#3a8ae0" stroke-width="3" /><circle cx="21" cy="21" r="5.5" fill="none" stroke="#e0607a" stroke-width="3" /><circle cx="15" cy="12" r="5" fill="none" stroke="#2fc0d0" stroke-width="3" /></svg>
          </div>
          <div class="app active">
            <svg width="28" height="34" viewBox="0 0 28 34"><rect width="28" height="34" rx="3" fill="#0f7cf4" /><path d="M3 21l5-7 5 4 5-5 7 8-6-2-5-1-5 2z" fill="#fff" /></svg>
          </div>
        </div>
        <div class="tray">
          ${TRAY.map((ic) => html`<svg viewBox="0 0 24 24">${ic}</svg>`)}
        </div>
      </div>
    `;
  }
}
